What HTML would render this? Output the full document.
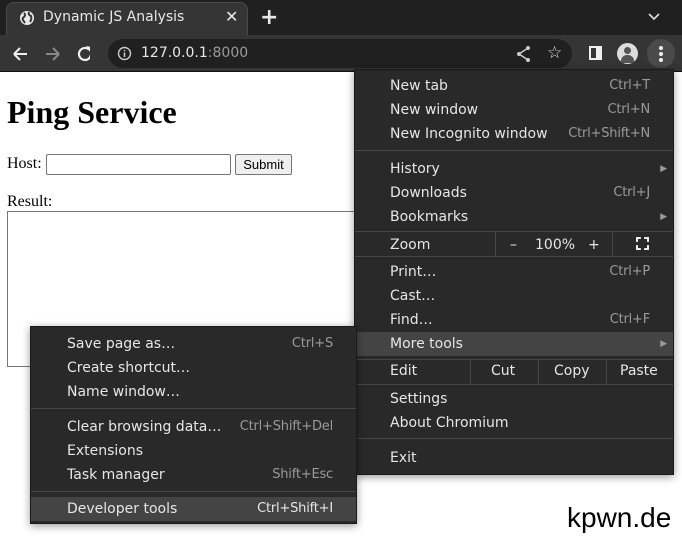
<!DOCTYPE html>
<html><head><style>
*{margin:0;padding:0;box-sizing:border-box}
body{width:682px;height:536px;overflow:hidden;background:#fff;position:relative;font-family:"DejaVu Sans","Liberation Sans",sans-serif}
.abs{position:absolute}
#tabbar{left:0;top:0;width:682px;height:35px;background:#202020}
#tab{left:6px;top:2px;width:242px;height:34px;background:#353535;border-radius:8px 8px 0 0;border:1px solid #4a4a4a;border-bottom:none}
#toolbar{left:0;top:35px;width:682px;height:37px;background:#353535;border-bottom:1px solid #111}
#omni{left:108px;top:39px;width:464px;height:29px;background:#202020;border-radius:15px}
.t{color:#e8e8e8;font-size:14px;white-space:nowrap}
.menu{background:#292929;border:1px solid #1a1a1a;box-shadow:0 2px 8px rgba(0,0,0,.4)}
.it{position:absolute;left:0;right:0;height:24px;line-height:24px;color:#e6e6e6;font-size:14px;white-space:nowrap}
.it .l{position:absolute}
.it .r{position:absolute;color:#9a9a9a;font-size:13px;letter-spacing:-0.2px}
.sep{position:absolute;left:0;right:0;height:1px;background:#474747}
.hl{background:#444}
</style></head><body>
<div class="abs" id="tabbar"></div>
<div class="abs" id="tab"></div>
<svg class="abs" style="left:19px;top:10px" width="16" height="16" viewBox="0 0 16 16"><circle cx="8" cy="8" r="7" fill="#e8e8e8"/><path d="M5 3 Q7 5 5 7 Q3 8 4 10 L6 13 M10 2 Q9 5 12 6 Q13 9 11 12" stroke="#353535" stroke-width="2" fill="none"/></svg>
<div class="abs t" style="left:43px;top:9px;font-size:14px">Dynamic JS Analysis</div>
<div class="abs t" style="left:225px;top:7px;font-size:16px">✕</div>
<div class="abs t" style="left:260px;top:5px;font-size:22px;font-weight:bold">+</div>
<svg class="abs" style="left:648px;top:12px" width="12" height="10"><path d="M1 2 L6 7 L11 2" stroke="#ddd" stroke-width="1.6" fill="none"/></svg>
<div class="abs" id="toolbar"></div>
<svg class="abs" style="left:10px;top:44px" width="80" height="20"><path d="M4 10 H17 M4 10 L10 4 M4 10 L10 16" stroke="#eee" stroke-width="2" fill="none"/><path d="M36 10 H49 M49 10 L43 4 M49 10 L43 16" stroke="#888" stroke-width="2" fill="none"/><path d="M82 10 A6 6 0 1 1 80 5.5" stroke="#eee" stroke-width="2.2" fill="none" transform="translate(-1,0)"/><path d="M76 2 L82 3 L80 8Z" fill="#eee"/></svg>
<div class="abs" id="omni"></div>
<svg class="abs" style="left:117px;top:46px" width="15" height="15"><circle cx="7.5" cy="7.5" r="6" stroke="#ccc" stroke-width="1.4" fill="none"/><path d="M7.5 6.5V11M7.5 4v1.3" stroke="#ccc" stroke-width="1.5"/></svg>
<div class="abs t" style="left:141px;top:45px;font-size:14px">127.0.0.1<span style="color:#999">:8000</span></div>
<svg class="abs" style="left:515px;top:45px" width="18" height="18"><path d="M13 3 L4 9 L13 15" stroke="#ccc" stroke-width="1.5" fill="none"/><circle cx="13" cy="3" r="2" fill="#ccc"/><circle cx="4" cy="9" r="2" fill="#ccc"/><circle cx="13" cy="15" r="2" fill="#ccc"/></svg>
<div class="abs t" style="left:547px;top:43px;font-size:17px;color:#ddd">☆</div>
<div class="abs" style="left:589px;top:46px;width:13px;height:14px;border:2px solid #eee;border-right:6px solid #eee"></div>
<div class="abs" style="left:617px;top:43px;width:21px;height:21px;border-radius:50%;background:#ddd;overflow:hidden"><div class="abs" style="left:7px;top:4px;width:7px;height:7px;border-radius:50%;background:#555"></div><div class="abs" style="left:4px;top:12px;width:13px;height:8px;border-radius:6px 6px 0 0;background:#555"></div></div>
<div class="abs" style="left:647px;top:39px;width:28px;height:29px;border-radius:14px;background:#4a4a4a"></div>
<div class="abs" style="left:659px;top:46px;width:4px;height:4px;border-radius:2px;background:#eee;box-shadow:0 6px 0 #eee,0 12px 0 #eee"></div>

<div class="abs" style="left:7px;top:94px;font:bold 32px 'Liberation Serif',serif;color:#000">Ping Service</div>
<div class="abs" style="left:7px;top:155px;font:16px 'Liberation Serif',serif;color:#000">Host:</div>
<div class="abs" style="left:46px;top:154px;width:185px;height:21px;border:1px solid #767676;border-radius:2px"></div>
<div class="abs" style="left:235px;top:154px;width:57px;height:21px;border:1px solid #767676;border-radius:2px;background:#efefef;font:13px 'Liberation Sans',sans-serif;text-align:center;line-height:19px">Submit</div>
<div class="abs" style="left:7px;top:193px;font:16px 'Liberation Serif',serif;color:#000">Result:</div>
<div class="abs" style="left:7px;top:211px;width:360px;height:156px;border:1px solid #767676"></div>
<div class="abs" style="left:567px;top:502px;font:28px 'Liberation Sans',sans-serif;color:#000">kpwn.de</div>

<div class="abs menu" style="left:354px;top:69px;width:320px;height:406px">
<div class="it" style="top:4px"><span class="l" style="left:35px">New tab</span><span class="r" style="right:23px">Ctrl+T</span></div>
<div class="it" style="top:28px"><span class="l" style="left:35px">New window</span><span class="r" style="right:23px">Ctrl+N</span></div>
<div class="it" style="top:52px"><span class="l" style="left:35px">New Incognito window</span><span class="r" style="right:23px">Ctrl+Shift+N</span></div>
<div class="sep" style="top:80px"></div>
<div class="it" style="top:87px"><span class="l" style="left:35px">History</span><span class="r" style="right:6px;font-size:9px">▶</span></div>
<div class="it" style="top:111px"><span class="l" style="left:35px">Downloads</span><span class="r" style="right:23px">Ctrl+J</span></div>
<div class="it" style="top:135px"><span class="l" style="left:35px">Bookmarks</span><span class="r" style="right:6px;font-size:9px">▶</span></div>
<div class="sep" style="top:161px"></div>
<div class="it" style="top:163px"><span class="l" style="left:35px">Zoom</span><span class="l" style="left:155px">–</span><span class="l" style="left:180px">100%</span><span class="l" style="left:233px">+</span></div>
<div class="abs" style="left:140px;top:161px;width:1px;height:25px;background:#474747"></div>
<div class="abs" style="left:257px;top:161px;width:1px;height:25px;background:#474747"></div>
<div class="abs" style="left:281px;top:167px;width:13px;height:13px;border:2px dashed #eee"></div>
<div class="sep" style="top:186px"></div>
<div class="it" style="top:190px"><span class="l" style="left:35px">Print…</span><span class="r" style="right:23px">Ctrl+P</span></div>
<div class="it" style="top:214px"><span class="l" style="left:35px">Cast…</span></div>
<div class="it" style="top:238px"><span class="l" style="left:35px">Find…</span><span class="r" style="right:23px">Ctrl+F</span></div>
<div class="it hl" style="top:262px"><span class="l" style="left:35px">More tools</span><span class="r" style="right:6px;font-size:9px">▶</span></div>
<div class="sep" style="top:289px"></div>
<div class="it" style="top:289px"><span class="l" style="left:35px">Edit</span><span class="l" style="left:136px">Cut</span><span class="l" style="left:199px">Copy</span><span class="l" style="left:265px">Paste</span></div>
<div class="abs" style="left:115px;top:289px;width:1px;height:25px;background:#474747"></div>
<div class="abs" style="left:183px;top:289px;width:1px;height:25px;background:#474747"></div>
<div class="abs" style="left:251px;top:289px;width:1px;height:25px;background:#474747"></div>
<div class="sep" style="top:314px"></div>
<div class="it" style="top:317px"><span class="l" style="left:35px">Settings</span></div>
<div class="it" style="top:341px"><span class="l" style="left:35px">About Chromium</span></div>
<div class="sep" style="top:368px"></div>
<div class="it" style="top:376px"><span class="l" style="left:35px">Exit</span></div>
</div>

<div class="abs menu" style="left:30px;top:326px;width:327px;height:198px">
<div class="it" style="top:5px"><span class="l" style="left:36px">Save page as…</span><span class="r" style="right:23px">Ctrl+S</span></div>
<div class="it" style="top:29px"><span class="l" style="left:36px">Create shortcut…</span></div>
<div class="it" style="top:53px"><span class="l" style="left:36px">Name window…</span></div>
<div class="sep" style="top:81px"></div>
<div class="it" style="top:88px"><span class="l" style="left:36px">Clear browsing data…</span><span class="r" style="right:23px">Ctrl+Shift+Del</span></div>
<div class="it" style="top:112px"><span class="l" style="left:36px">Extensions</span></div>
<div class="it" style="top:136px"><span class="l" style="left:36px">Task manager</span><span class="r" style="right:23px">Shift+Esc</span></div>
<div class="sep" style="top:164px"></div>
<div class="it hl" style="top:170px"><span class="l" style="left:36px">Developer tools</span><span class="r" style="right:23px;color:#e6e6e6">Ctrl+Shift+I</span></div>
</div>
</body></html>
